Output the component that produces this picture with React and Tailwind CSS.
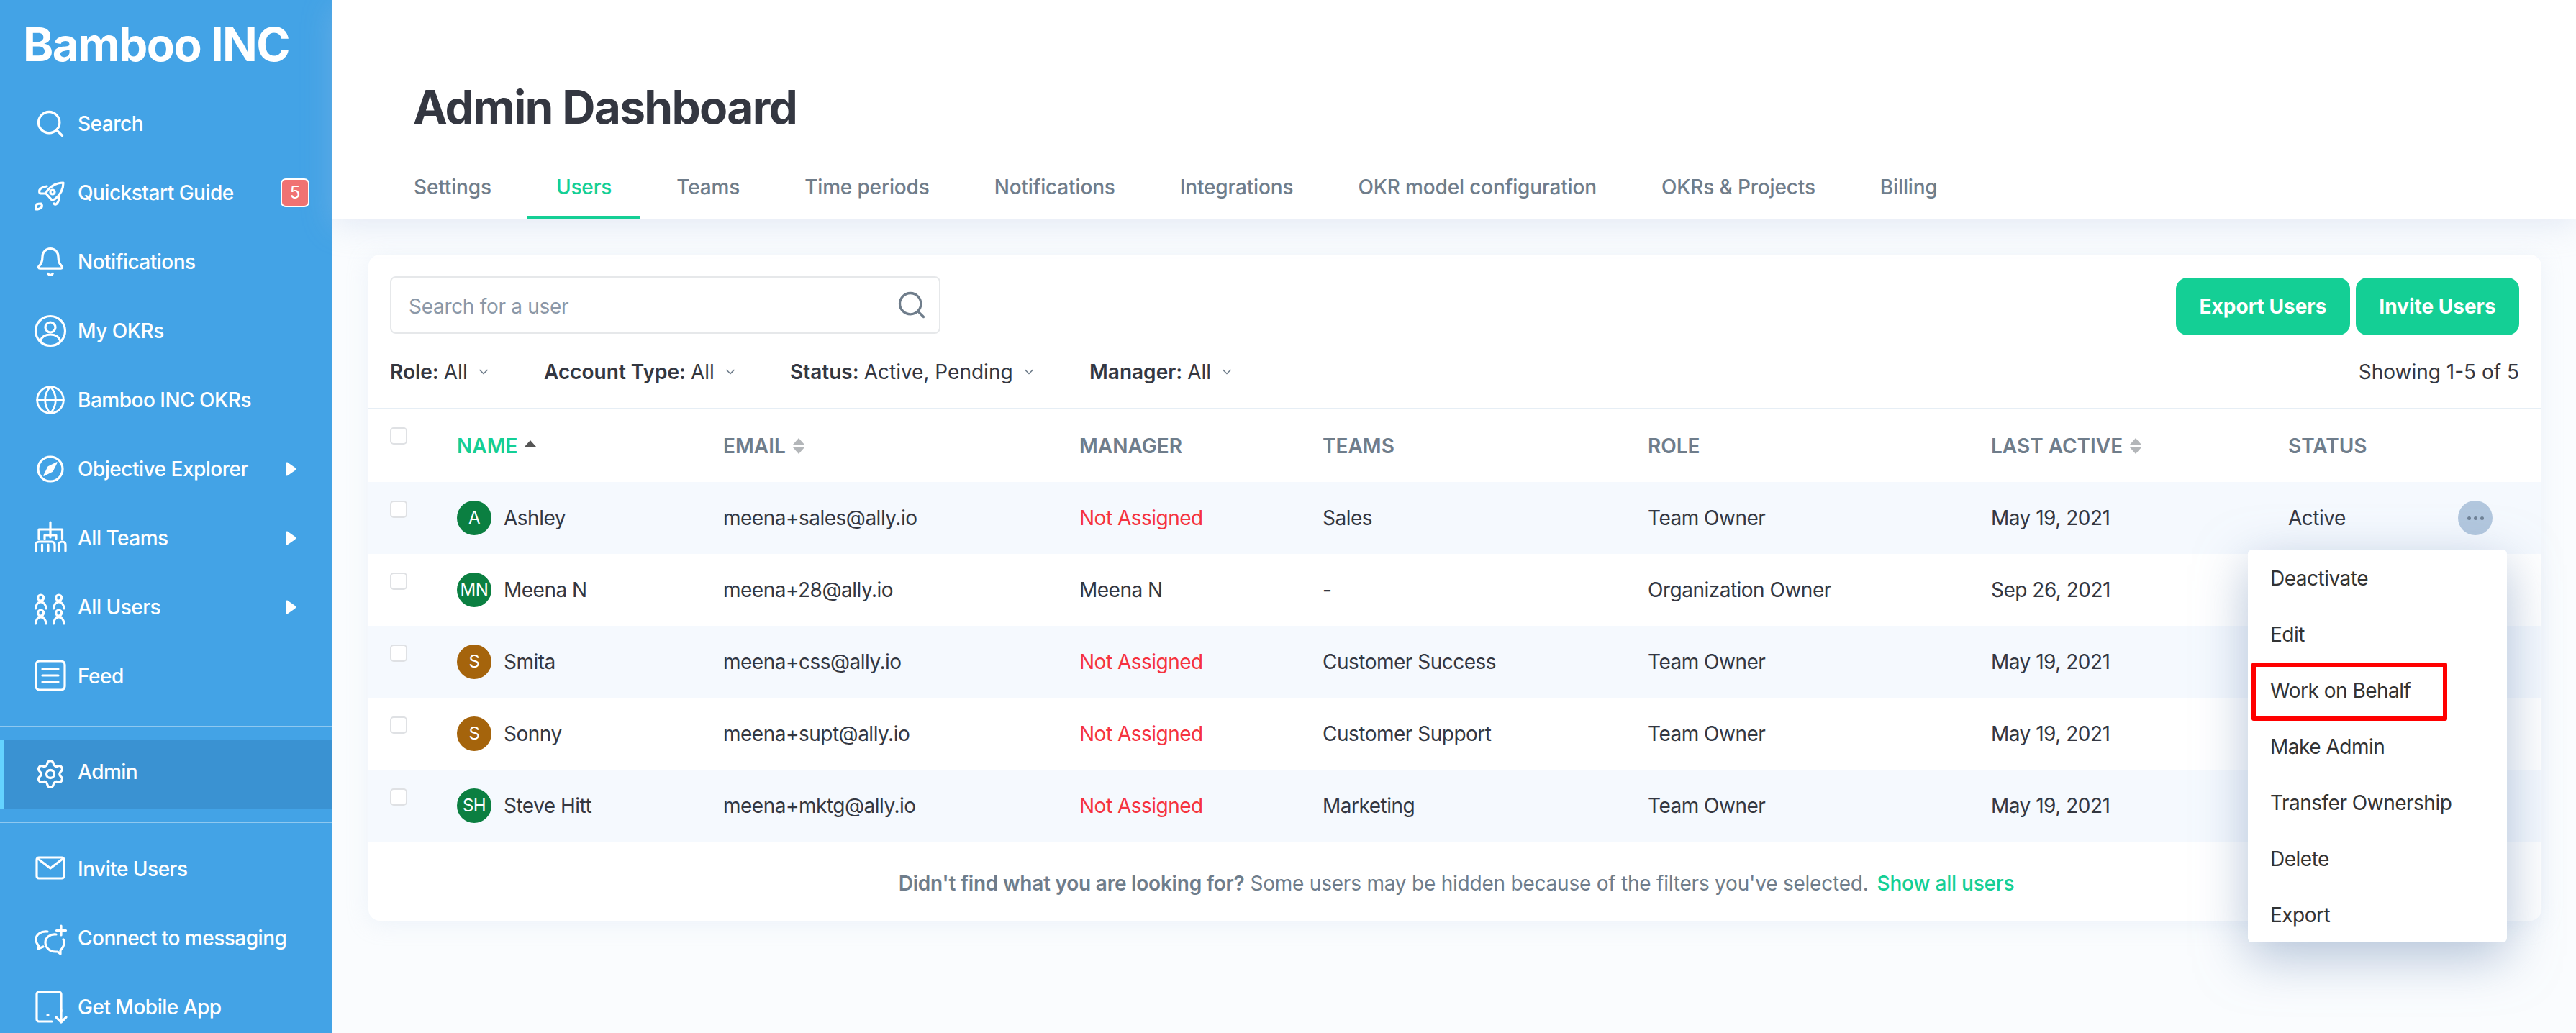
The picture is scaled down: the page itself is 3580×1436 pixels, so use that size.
import { Search, Bell, Globe, Settings, ChevronDown } from 'lucide-react'

const navTop = [
  { label: 'Search', icon: <Search size={44} strokeWidth={1.8} /> },
  { label: 'Quickstart Guide', icon: <RocketIcon />, badge: '5' },
  { label: 'Notifications', icon: <Bell size={44} strokeWidth={1.8} /> },
  { label: 'My OKRs', icon: <ProfileIcon /> },
  { label: 'Bamboo INC OKRs', icon: <Globe size={48} strokeWidth={1.5} /> },
  { label: 'Objective Explorer', icon: <CompassIcon />, arrow: true },
  { label: 'All Teams', icon: <TeamsIcon />, arrow: true },
  { label: 'All Users', icon: <UsersIcon />, arrow: true },
  { label: 'Feed', icon: <FeedIcon /> },
]

const navBottom = [
  { label: 'Invite Users', icon: <MailIcon /> },
  { label: 'Connect to messaging', icon: <ChatIcon /> },
  { label: 'Get Mobile App', icon: <MobileIcon /> },
]

const tabs = ['Settings', 'Users', 'Teams', 'Time periods', 'Notifications', 'Integrations', 'OKR model configuration', 'OKRs & Projects', 'Billing']

const users = [
  { initials: 'A', name: 'Ashley', email: 'meena+sales@ally.io', manager: 'Not Assigned', team: 'Sales', role: 'Team Owner', active: 'May 19, 2021', status: 'Active', color: 'bg-[#0b7f41]' },
  { initials: 'MN', name: 'Meena N', email: 'meena+28@ally.io', manager: 'Meena N', team: '-', role: 'Organization Owner', active: 'Sep 26, 2021', color: 'bg-[#0b7f41]' },
  { initials: 'S', name: 'Smita', email: 'meena+css@ally.io', manager: 'Not Assigned', team: 'Customer Success', role: 'Team Owner', active: 'May 19, 2021', color: 'bg-[#a5640c]' },
  { initials: 'S', name: 'Sonny', email: 'meena+supt@ally.io', manager: 'Not Assigned', team: 'Customer Support', role: 'Team Owner', active: 'May 19, 2021', color: 'bg-[#a5640c]' },
  { initials: 'SH', name: 'Steve Hitt', email: 'meena+mktg@ally.io', manager: 'Not Assigned', team: 'Marketing', role: 'Team Owner', active: 'May 19, 2021', color: 'bg-[#0b7f41]' },
]

const menuItems = ['Deactivate', 'Edit', 'Work on Behalf', 'Make Admin', 'Transfer Ownership', 'Delete', 'Export']

const filters = [
  { key: 'Role:', value: 'All', width: 'w-[214px]' },
  { key: 'Account Type:', value: 'All', width: 'w-[342px]' },
  { key: 'Status:', value: 'Active, Pending', width: 'w-[416px]' },
  { key: 'Manager:', value: 'All', width: '' },
]

const gridCols = 'grid grid-cols-[123px_370px_495px_338px_452px_477px_413px_236px_1fr] items-center'

function Svg({ children }) {
  return (
    <svg className="overflow-visible" width="44" height="44" viewBox="0 0 44 44" fill="none" stroke="currentColor" strokeWidth="3.2" strokeLinecap="round" strokeLinejoin="round">
      {children}
    </svg>
  )
}

function RocketIcon() {
  return (
    <Svg>
      <path d="M40 8C30 8 23 12 17 20l-1 3 8 9 4-1C36 25 40 18 40 8Z" />
      <circle cx="25" cy="21" r="3" />
      <path d="M17 13C12 14 8 16 7 18c-1 2 0 5 1 5h7" />
      <path d="M27 37c1 2 3 1 4 0 2-2 3-5 3-9" />
      <path d="M3 38c2-1 5-1 6-1 1 1 2 4 1 5-2 2-5 3-8 3 0-3 0-5 1-7Z" />
    </Svg>
  )
}

function ProfileIcon() {
  return (
    <Svg>
      <circle cx="22" cy="22" r="20.500" />
      <circle cx="22" cy="17" r="7" />
      <path d="M8 36c2-6 7-9 14-9s12 3 14 9" />
    </Svg>
  )
}

function CompassIcon() {
  return (
    <Svg>
      <circle cx="22" cy="22" r="17" />
      <path d="M31 13l-12 6-6 12 12-6Z" fill="currentColor" strokeWidth="1.500" />
    </Svg>
  )
}

function TeamsIcon() {
  return (
    <Svg>
      <path d="M22 0v21M6 23V10h32.500v13M14 23v-5h16v5" />
      <path d="M2 40v-9a4 4 0 0 1 4-4h18a4 4 0 0 1 4 4v9M10.500 40v-9M19 40v-9" />
      <path d="M34 40v-9a4 4 0 0 1 4-4h1a4 4 0 0 1 4 4v9" />
    </Svg>
  )
}

function UsersIcon() {
  return (
    <Svg>
      <circle cx="8.700" cy="9" r="4" />
      <circle cx="33.700" cy="9" r="4" />
      <path d="M1.500 24c0-5 3-9 7.200-9s7.300 4 7.300 9M26.500 24c0-5 3-9 7.200-9s7.300 4 7.300 9" />
      <circle cx="8.700" cy="30" r="4" />
      <circle cx="33.700" cy="30" r="4" />
      <path d="M1.500 45c0-5 3-9 7.200-9s7.300 4 7.300 9M26.500 45c0-5 3-9 7.200-9s7.300 4 7.300 9" />
    </Svg>
  )
}

function FeedIcon() {
  return (
    <Svg>
      <rect x="2" y="1" width="40" height="40" rx="5" />
      <path d="M11 12h22M11 21h22M11 30h22" />
    </Svg>
  )
}

function MailIcon() {
  return (
    <Svg>
      <rect x="3" y="6" width="38" height="29" rx="3" />
      <path d="M5 8l17 13 17-13" />
    </Svg>
  )
}

function ChatIcon() {
  return (
    <Svg>
      <path d="M37 5v13M30.500 11.500h13" />
      <path d="M18 13C9 12 2 17 2 24c0 4 2 7 4 9l-1 4 7-3" />
      <path d="M30 17c-8-1-15 4-15 11 0 7 6 13 14 13h3l4 3v-5c3-3 5-6 5-10 0-3 0-4-1-5" />
    </Svg>
  )
}

function MobileIcon() {
  return (
    <Svg>
      <path d="M24 42H6a3 3 0 0 1-3-3V4a3 3 0 0 1 3-3h28a3 3 0 0 1 3 3v24" />
      <path d="M18 33h1M37 26v17M30 36l7 7 7-7" />
    </Svg>
  )
}

function NavRow({ item, active }) {
  return (
    <div className={`relative flex h-[96px] items-center ${active ? 'bg-[#3a92d2]' : ''}`}>
      {active && <div className="absolute left-0 top-0 h-full w-[6px] bg-[#64d3ff]" />}
      <div className="ml-[48px] mr-[16px] flex h-[44px] w-[44px] shrink-0 items-center justify-center">{item.icon}</div>
      <span className={`text-[28px] font-medium tracking-[-0.5px] ${active ? 'pb-[6px]' : ''}`}>{item.label}</span>
      {item.badge && (
        <span className="absolute left-[390px] top-[28px] flex h-[40px] w-[40px] items-center justify-center rounded-[7px] border-2 border-white bg-[#f07272] text-[24px]">{item.badge}</span>
      )}
      {item.arrow && (
        <svg className="absolute left-[396px] top-[38px]" width="16" height="20" viewBox="0 0 16 20" fill="white">
          <path d="M1 3c0-2 1.500-3 3-2l10 7c1.500 1 1.500 3 0 4L4 19c-1.500 1-3 0-3-2Z" />
        </svg>
      )}
    </div>
  )
}

function Sidebar() {
  return (
    <aside className="h-[1436px] w-[462px] shrink-0 overflow-hidden bg-[#43a3e6] text-white">
      <div className="pl-[32px] pt-[27px] text-[64px] leading-[70px] font-bold tracking-[-1.6px]">Bamboo INC</div>
      <div className="mt-[27px]">
        {navTop.map((item) => (
          <NavRow key={item.label} item={item} />
        ))}
      </div>
      <div className="mt-[21px] border-t-2 border-white/40 pt-[17px] pb-[18px]">
        <NavRow item={{ label: 'Admin', icon: <Settings size={44} strokeWidth={1.8} /> }} active />
      </div>
      <div className="border-t-2 border-white/40 pt-[16px]">
        {navBottom.map((item) => (
          <NavRow key={item.label} item={item} />
        ))}
      </div>
    </aside>
  )
}

function SortCaret() {
  return (
    <svg className="ml-[10px]" width="16" height="22" viewBox="0 0 16 22" fill="#b3b6b9">
      <path d="M8 0l8 9H0ZM8 22l8-9H0Z" />
    </svg>
  )
}

function Checkbox() {
  return <div className="ml-[30px] h-[24px] w-[24px] rounded-[5px] border-2 border-[#dfe1e4] bg-white" />
}

function UserRow({ user, index }) {
  const tinted = index % 2 === 0
  return (
    <div className={`${gridCols} relative h-[100px] text-[28px] tracking-[-0.5px] text-[#343741] ${tinted ? 'bg-[#f5f9fe]' : 'bg-white'}`}>
      <div className="self-start pt-[26px]"><Checkbox /></div>
      <div className="flex items-center">
        <div className={`flex h-[48px] w-[48px] items-center justify-center rounded-full text-[24px] text-white ${user.color}`}>{user.initials}</div>
        <span className="ml-[17px]">{user.name}</span>
      </div>
      <div>{user.email}</div>
      <div className={user.manager === 'Not Assigned' ? 'text-[#f5333f]' : ''}>{user.manager}</div>
      <div>{user.team}</div>
      <div>{user.role}</div>
      <div>{user.active}</div>
      <div>{user.status}</div>
      {index === 0 && (
        <div className="flex h-[48px] w-[48px] items-center justify-center gap-[4px] rounded-full bg-[#b2c7de]">
          <span className="h-[5px] w-[5px] rounded-full bg-[#6f8296]" />
          <span className="h-[5px] w-[5px] rounded-full bg-[#6f8296]" />
          <span className="h-[5px] w-[5px] rounded-full bg-[#6f8296]" />
        </div>
      )}
    </div>
  )
}

function RowMenu() {
  return (
    <div className="absolute left-[3124px] top-[764px] h-[546px] w-[360px] rounded-[6px] bg-white py-[1px] shadow-[0_20px_70px_rgba(130,155,190,0.6)]">
      {menuItems.map((label) => (
        <div key={label} className="flex h-[78px] items-center pl-[31px] text-[28px] tracking-[-0.5px] text-[#333333]">{label}</div>
      ))}
      <div className="absolute left-[5px] top-[157px] h-[81px] w-[272px] rounded-[3px] border-[6px] border-[#ff0000]" />
    </div>
  )
}

export default function App() {
  return (
    <div className="relative flex h-[1436px] w-[3580px] overflow-hidden bg-[#fafcfe] [font-family:Inter,sans-serif] antialiased">
      <Sidebar />
      <main className="min-w-0 flex-1">
        <header className="relative h-[304px] bg-white shadow-[0_10px_40px_rgba(180,195,225,0.3)]">
          <h1 className="pl-[112px] pt-[110px] text-[64px] leading-[78px] font-bold tracking-[-1.7px] text-[#343741]">Admin Dashboard</h1>
          <nav className="absolute bottom-0 left-[73px] flex h-[84px] gap-[10px]">
            {tabs.map((tab) => (
              <div key={tab} className={`flex items-center border-b-4 px-[40px] text-[28px] font-medium tracking-[-0.16px] ${tab === 'Users' ? 'border-[#14cf95] text-[#14cf95]' : 'border-transparent text-[#6f7d8b]'}`}>
                {tab}
              </div>
            ))}
          </nav>
        </header>

        <section className="ml-[50px] mt-[50px] h-[926px] w-[3020px] rounded-[16px] bg-white shadow-[0_4px_30px_rgba(200,215,235,0.25)]">
          <div className="flex items-start justify-between pl-[30px] pr-[31px] pt-[30px]">
            <div className="flex h-[80px] w-[765px] items-center justify-between rounded-[8px] border-2 border-[#e6e8ea] pl-[24px] pr-[16px] text-[28px] tracking-[-0.3px] text-[#8b98a8]">
              <span className="pt-[3px]">Search for a user</span>
              <Search size={44} strokeWidth={1.8} className="text-[#6f7d8b]" />
            </div>
            <div className="flex gap-[8px] pt-[2px] text-[28px] font-bold text-white">
              <div className="flex h-[80px] w-[242px] items-center justify-center rounded-[16px] bg-[#14cf95]">Export Users</div>
              <div className="flex h-[80px] w-[227px] items-center justify-center rounded-[16px] bg-[#14cf95]">Invite Users</div>
            </div>
          </div>

          <div className="mt-[28px] flex h-[46px] items-center pl-[30px] pr-[31px] text-[28px] text-[#343741]">
            {filters.map((f) => (
              <div key={f.key} className={`flex items-center ${f.width}`}>
                <span className="font-semibold">{f.key}</span>
                <span className="ml-[7px]">{f.value}</span>
                <ChevronDown size={20} strokeWidth={2} className="ml-[12px] text-[#6f7d8b]" />
              </div>
            ))}
            <div className="ml-auto">Showing 1-5 of 5</div>
          </div>

          <div className={`${gridCols} mt-[27px] h-[103px] border-t-2 border-[#e6eef5] text-[28px] font-semibold text-[#6f7d8b]`}>
            <div className="self-start pt-[25px]"><Checkbox /></div>
            <div className="flex items-center text-[#14cf95]">
              NAME
              <svg className="ml-[10px] mb-[6px]" width="16" height="9" viewBox="0 0 16 9" fill="#555555"><path d="M8 0l8 9H0Z" /></svg>
            </div>
            <div className="flex items-center">EMAIL<SortCaret /></div>
            <div>MANAGER</div>
            <div>TEAMS</div>
            <div>ROLE</div>
            <div className="flex items-center">LAST ACTIVE<SortCaret /></div>
            <div>STATUS</div>
          </div>

          {users.map((user, index) => (
            <UserRow key={user.email} user={user} index={index} />
          ))}

          <div className="flex h-[110px] items-center justify-center pl-[4px] pt-[6px] text-[28px] tracking-[-0.22px] text-[#6f7d8b]">
            <span className="font-semibold">Didn't find what you are looking for?</span>
            <span className="ml-[8px]">Some users may be hidden because of the filters you've selected.</span>
            <span className="ml-[12px] font-medium text-[#14cf95]">Show all users</span>
          </div>
        </section>
      </main>
      <RowMenu />
    </div>
  )
}
